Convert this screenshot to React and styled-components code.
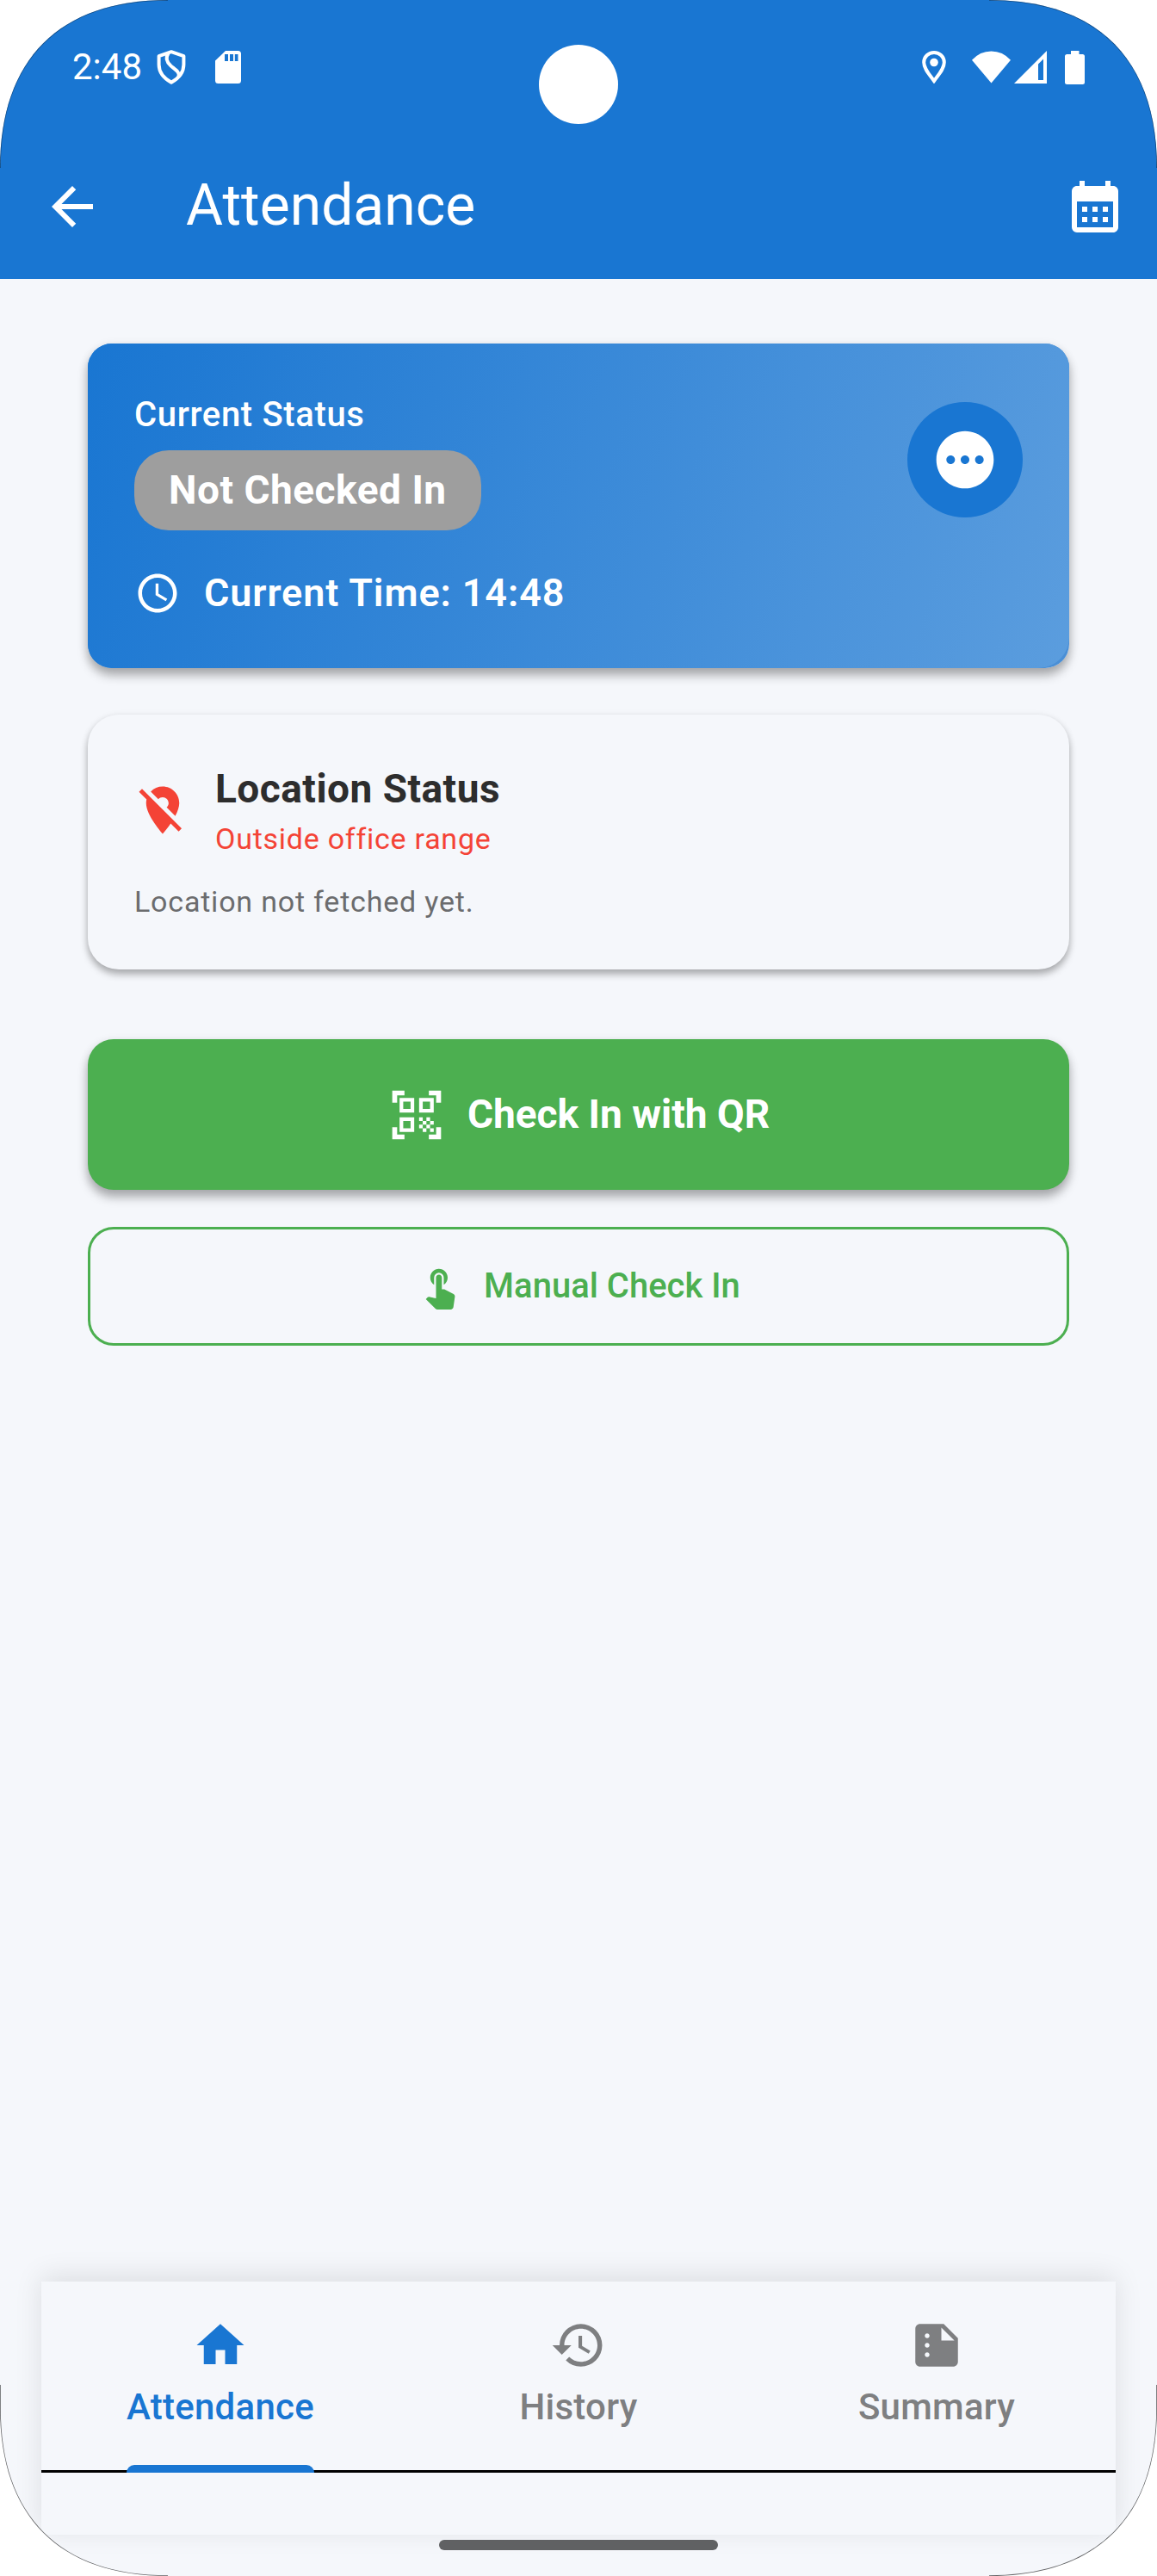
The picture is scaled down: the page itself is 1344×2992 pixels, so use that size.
import React from 'react';
import styled, { createGlobalStyle, css } from 'styled-components';
import { MdArrowBack, MdCalendarMonth, MdPending, MdSchedule, MdLocationOff, MdQrCodeScanner, MdTouchApp, MdHome, MdHistory, MdSummarize } from 'react-icons/md';

const BLUE = '#1976d2';
const GREEN = '#4caf50';
const SURFACE = '#f5f7fb';

const GlobalStyle = createGlobalStyle`
  * { box-sizing: border-box; }
  body { margin: 0; background: #fff; font-family: Roboto, "Noto Sans", sans-serif; }
  button { font: inherit; border: 0; padding: 0; background: none; color: inherit; }
  svg { display: block; flex: none; }
`;

const Screen = styled.div`
  position: relative;
  width: 1344px;
  height: 2992px;
  display: flex;
  flex-direction: column;
  background: ${SURFACE};
  overflow: hidden;
  clip-path: path("M0 195 C0 69 69 0 195 0 H1149 C1275 0 1344 69 1344 195 V2797 C1344 2923 1275 2992 1149 2992 H195 C69 2992 0 2923 0 2797 Z");
`;

const ScreenEdge = styled.svg`
  position: absolute;
  inset: 0;
  pointer-events: none;
`;

const Header = styled.header`
  height: 324px;
  background: ${BLUE};
  color: #fff;
`;

const Camera = styled.div`
  position: absolute;
  top: 52px;
  left: 626px;
  width: 92px;
  height: 92px;
  border-radius: 50%;
  background: #fff;
`;

const StatusBar = styled.div`
  height: 156px;
  padding: 0 84px;
  display: flex;
  justify-content: space-between;
`;

const StatusGroup = styled.div`
  display: flex;
  align-items: center;
  height: 156px;
`;

const AppBar = styled.div`
  height: 168px;
  padding: 0 36px 0 48px;
  display: flex;
  align-items: center;
`;

const Label = styled.span`
  white-space: nowrap;
  line-height: 1.2;
  font-size: ${(p) => p.$size}px;
  font-weight: ${(p) => p.$weight || 400};
  letter-spacing: ${(p) => p.$spacing || 0}px;
  color: ${(p) => p.$color || 'inherit'};
`;

const Title = styled.h1`
  margin: 0 auto 2px 96px;
  font-size: 66px;
  font-weight: 400;
  line-height: 76px;
`;

const Main = styled.main`
  flex: 1;
  padding: 75px 102px 0;
  display: flex;
  flex-direction: column;
`;

const StatusCard = styled.section`
  height: 377px;
  color: #fff;
  border-radius: 28px;
  background: linear-gradient(108.3deg, ${BLUE}, #4a8fd6);
  box-shadow: 0 9px 12px rgba(0, 0, 0, 0.26), 0 3px 12px rgba(0, 0, 0, 0.12);
`;

const StatusBody = styled.div`
  height: 100%;
  padding: 68px 54px 0;
  display: flex;
  justify-content: space-between;
  align-items: flex-start;
  border-radius: 28px 28px 36px 28px;
  background: linear-gradient(108.3deg, ${BLUE}, #5b9dde);
`;

const StatusInfo = styled.div`
  display: flex;
  flex-direction: column;
  align-items: flex-start;
  margin-top: -9px;
`;

const Badge = styled.div`
  margin-top: 17px;
  height: 93px;
  padding: 0 40px;
  display: flex;
  align-items: center;
  border-radius: 40px;
  background: #9e9e9e;
`;

const TimeRow = styled.div`
  display: flex;
  align-items: center;
  gap: 27px;
  height: 54px;
  margin-top: 46px;
`;

const MoreButton = styled.button`
  width: 134px;
  height: 134px;
  border-radius: 50%;
  background: ${BLUE};
  display: grid;
  place-items: center;
`;

const LocationCard = styled.section`
  margin-top: 54px;
  height: 296px;
  padding: 58px 54px 0;
  border-radius: 36px;
  background: ${SURFACE};
  box-shadow: 0 6px 9px rgba(0, 0, 0, 0.26), 0 2px 9px rgba(0, 0, 0, 0.1);
`;

const LocationRow = styled.div`
  display: flex;
  align-items: center;
  gap: 28px;
  height: 105px;
  margin-bottom: 34px;
`;

const Stack = styled.div`
  display: flex;
  flex-direction: column;
  gap: 10px;
  padding-top: 2px;
`;

const Action = styled.button`
  width: 100%;
  display: flex;
  align-items: center;
  justify-content: center;
  border-radius: 30px;
  ${(p) =>
    p.$filled
      ? css`
          margin-top: 81px;
          height: 175px;
          gap: 25px;
          color: #fff;
          background: ${GREEN};
          box-shadow: 0 9px 12px rgba(0, 0, 0, 0.26), 0 3px 12px rgba(0, 0, 0, 0.12);
        `
      : css`
          margin-top: 43px;
          height: 138px;
          gap: 24px;
          color: ${GREEN};
          border: 3px solid ${GREEN};
        `}
`;

const TabBar = styled.nav`
  width: 1248px;
  height: 294px;
  margin: 0 auto 48px;
  background: ${SURFACE};
  box-shadow: 0 -6px 30px rgba(0, 0, 0, 0.1);
`;

const Tabs = styled.div`
  height: 222px;
  display: grid;
  grid-template-columns: repeat(3, 1fr);
  border-bottom: 3px solid #000;
`;

const Tab = styled.button`
  height: 222px;
  padding-top: 41px;
  display: flex;
  flex-direction: column;
  align-items: center;
  color: ${(p) => (p.$active ? BLUE : '#7e7f81')};
`;

const TabLabel = styled(Label)`
  margin-top: 14px;
`;

const Indicator = styled.span`
  width: 218px;
  height: 9px;
  margin-top: auto;
  border-radius: 9px 9px 0 0;
  background: ${BLUE};
`;

const HomeHandle = styled.div`
  position: absolute;
  left: 510px;
  bottom: 30px;
  width: 324px;
  height: 12px;
  border-radius: 6px;
  background: #606163;
`;

const Glyph = styled.svg`
  margin-left: ${(p) => p.$gap || 0}px;
`;

const TABS = [
  { name: 'Attendance', Icon: MdHome, active: true },
  { name: 'History', Icon: MdHistory },
  { name: 'Summary', Icon: MdSummarize },
];

const ShieldIcon = () => (
  <Glyph $gap={17} width="34" height="40" viewBox="0 0 34 40" fill="none" stroke="#fff" strokeWidth="4" strokeLinejoin="round">
    <path d="M17 2.200L31.400 7.200V17C31.400 27 25.500 33 17 37.800C8.500 33 2.600 27 2.600 17V7.200Z" />
    <path d="M13.500 4C10 9 11 13.500 16.500 18.500C22.500 23.500 27 26 25.500 31" />
  </Glyph>
);

const SdIcon = () => (
  <Glyph $gap={34} width="30" height="38" viewBox="0 0 30 38" fill="#fff">
    <path fillRule="evenodd" d="M12 0H26.500Q30 0 30 3.500V34.500Q30 38 26.500 38H3.500Q0 38 0 34.500V11.500ZM11 4V12H15V4ZM17 4V12H21V4ZM22.800 4V12H26.500V4Z" />
  </Glyph>
);

const PinIcon = () => (
  <Glyph width="28" height="38" viewBox="0 0 28 38">
    <path d="M14 2C7.500 2 2.200 7 2.200 13.500C2.200 21 9 28 14 35C19 28 25.800 21 25.800 13.500C25.800 7 20.500 2 14 2Z" fill="none" stroke="#fff" strokeWidth="4" />
    <circle cx="14" cy="13.500" r="4.800" fill="#fff" />
  </Glyph>
);

const WifiIcon = () => (
  <Glyph $gap={30} width="45" height="38" viewBox="0 0 46 38" fill="#fff">
    <path d="M0 10.500Q9.500 0 23 0T46 10.500L23 38Z" />
  </Glyph>
);

const SignalIcon = () => (
  <Glyph $gap={4} width="38" height="38" viewBox="0 0 38 38" fill="#fff">
    <path fillRule="evenodd" d="M38 0V38H0ZM34 9.500L28 15.500V34H34Z" />
  </Glyph>
);

const BatteryIcon = () => (
  <Glyph $gap={21} width="23" height="39" viewBox="0 0 23 39" fill="#fff">
    <path d="M7 0H16.500V4H20.500Q23 4 23 6.500V36.500Q23 39 20.500 39H2.500Q0 39 0 36.500V6.500Q0 4 2.500 4H7Z" />
  </Glyph>
);

export default function App() {
  return (
    <>
      <GlobalStyle />
      <Screen>
        <Header>
          <StatusBar>
            <StatusGroup>
              <Label $size={42}>2:48</Label>
              <ShieldIcon />
              <SdIcon />
            </StatusGroup>
            <StatusGroup>
              <PinIcon />
              <WifiIcon />
              <SignalIcon />
              <BatteryIcon />
            </StatusGroup>
          </StatusBar>
          <Camera />
          <AppBar>
            <MdArrowBack size={72} />
            <Title>Attendance</Title>
            <MdCalendarMonth size={72} />
          </AppBar>
        </Header>
        <Main>
          <StatusCard>
            <StatusBody>
              <StatusInfo>
                <Label $size={40} $weight={500} $spacing={0.65}>Current Status</Label>
                <Badge>
                  <Label $size={46} $weight={700} $spacing={0.5}>Not Checked In</Label>
                </Badge>
                <TimeRow>
                  <MdSchedule size={54} />
                  <Label $size={45} $weight={600} $spacing={0.9}>Current Time: 14:48</Label>
                </TimeRow>
              </StatusInfo>
              <MoreButton><MdPending size={80} /></MoreButton>
            </StatusBody>
          </StatusCard>
          <LocationCard>
            <LocationRow>
              <MdLocationOff size={66} color="#f44336" />
              <Stack>
                <Label $size={46} $weight={700} $spacing={0.48} $color="#2d2d2d">Location Status</Label>
                <Label $size={34} $spacing={0.75} $color="#f44336">Outside office range</Label>
              </Stack>
            </LocationRow>
            <Label $size={34} $spacing={0.8} $color="#6b6c6e">Location not fetched yet.</Label>
          </LocationCard>
          <Action $filled>
            <MdQrCodeScanner size={68} />
            <Label $size={46} $weight={700}>Check In with QR</Label>
          </Action>
          <Action>
            <MdTouchApp size={54} />
            <Label $size={40} $weight={500}>Manual Check In</Label>
          </Action>
        </Main>
        <TabBar>
          <Tabs>
            {TABS.map(({ name, Icon, active }) => (
              <Tab key={name} $active={active}>
                <Icon size={66} />
                <TabLabel $size={42} $weight={500} $spacing={0.25}>{name}</TabLabel>
                {active && <Indicator />}
              </Tab>
            ))}
          </Tabs>
        </TabBar>
        <HomeHandle />
        <ScreenEdge width="1344" height="2992" viewBox="0 0 1344 2992" fill="none" stroke="#000" strokeWidth="1.600">
          <path d="M0 195C0 69 69 0 195 0M1149 0C1275 0 1344 69 1344 195" opacity="0.4" />
          <path d="M0 2770V2797C0 2923 69 2992 195 2992M1149 2992C1275 2992 1344 2923 1344 2797V2770" opacity="0.6" />
        </ScreenEdge>
      </Screen>
    </>
  );
}
